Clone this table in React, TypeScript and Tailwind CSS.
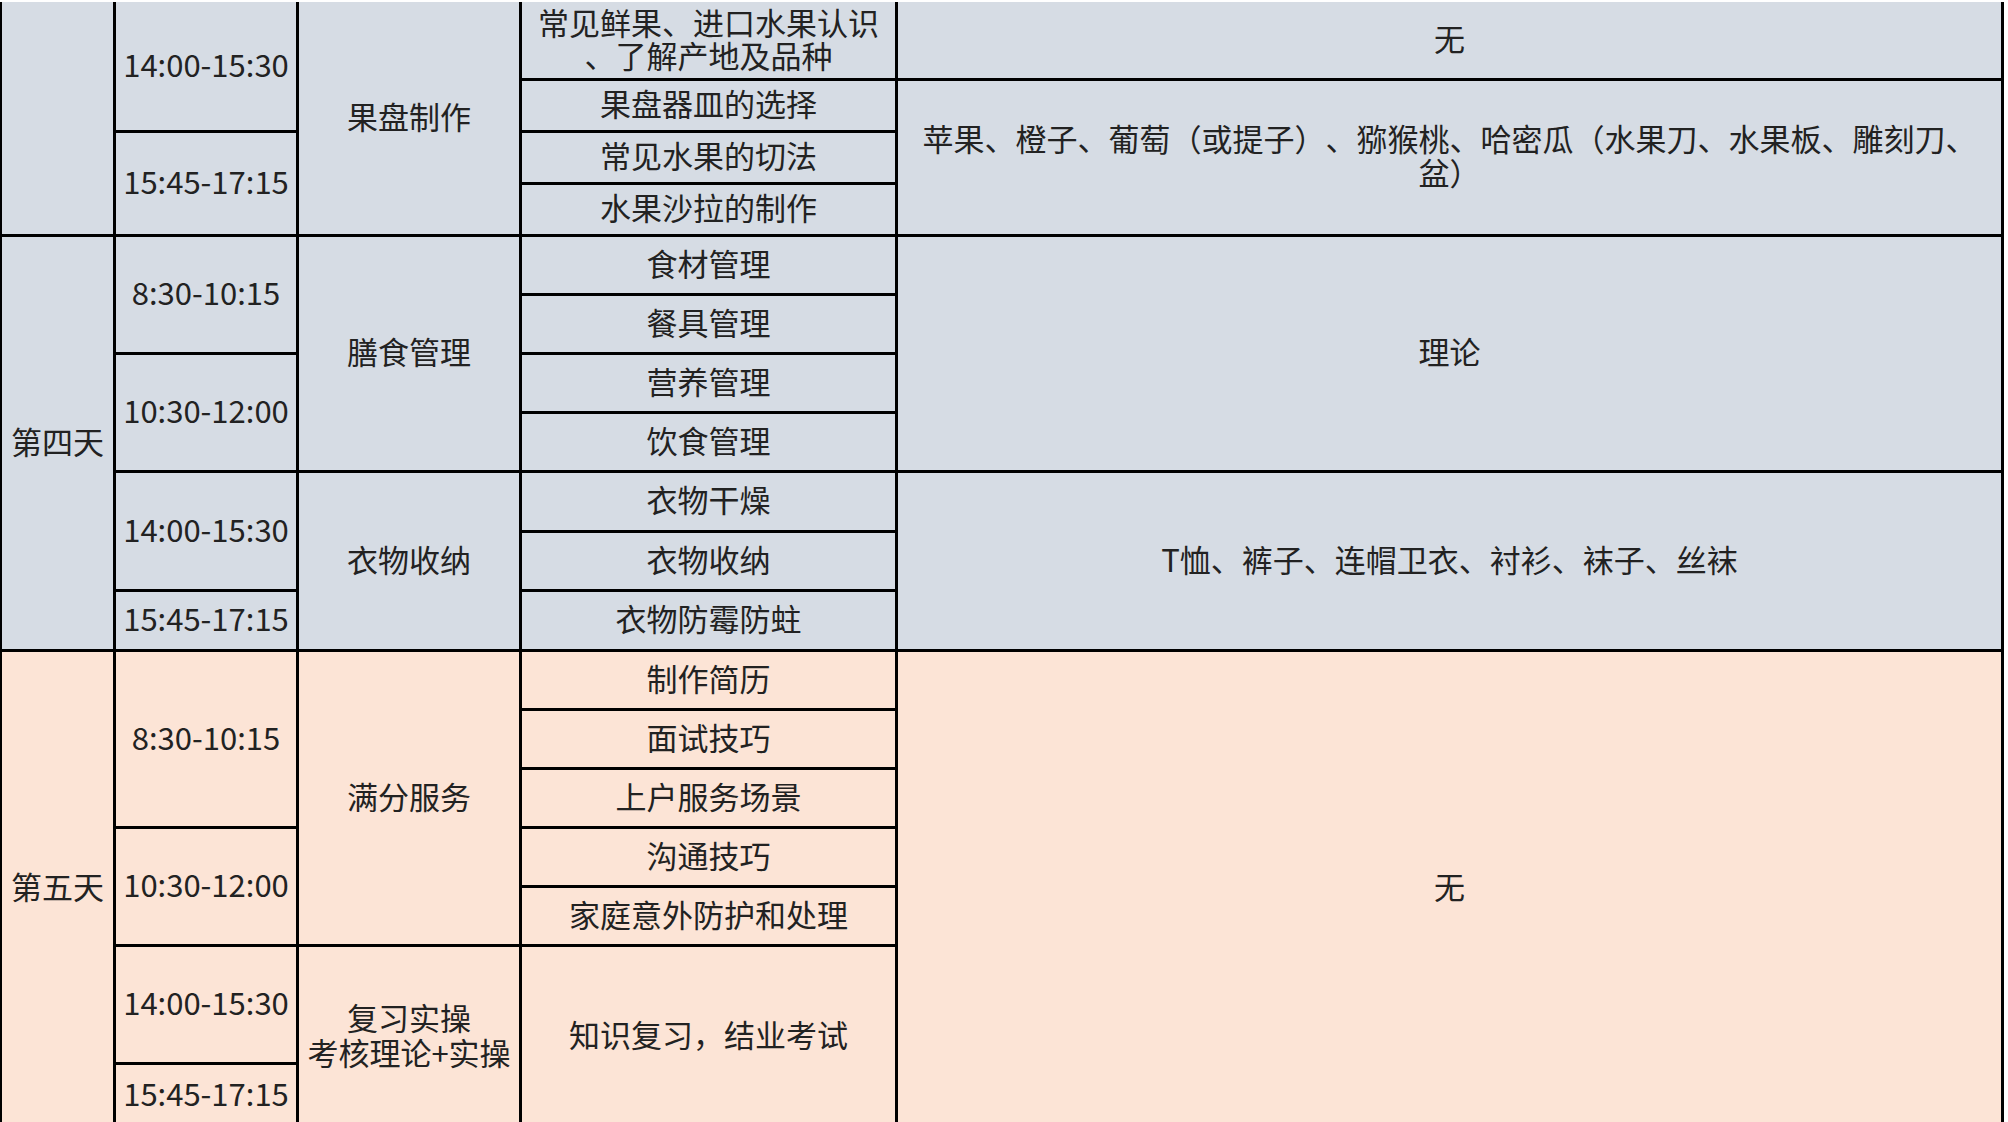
import React from "react";

type C = { pos: string; bg: string; children?: React.ReactNode };

function Cell({ pos, bg, children }: C) {
  return (
    <div className={`${pos} ${bg} flex items-center justify-center text-center leading-[34px] pb-[5px]`}>
      {children}
    </div>
  );
}

const B = "bg-[#d6dce4]";
const P = "bg-[#fce4d6]";

export default function App() {
  return (
    <div className="w-[2008px] h-[1122px] overflow-hidden bg-white">
      <div
        className="mt-[2px] w-[2004px] bg-black pl-[2px] pr-[3px] grid gap-[3px] grid-cols-[111px_180px_220px_373px_1103px] grid-rows-[76px_49px_49px_49px_56px_56px_56px_56px_57px_56px_57px_56px_56px_56px_56px_56px_115px_60px] text-[31px] text-[#222222] [text-spacing-trim:space-all]"
        style={{ fontFamily: '"Noto Sans CJK SC", "Noto Sans", sans-serif' }}
      >
        {/* Column 1: day */}
        <Cell pos="col-start-1 [grid-row:1/5]" bg={B} />
        <Cell pos="col-start-1 [grid-row:5/12]" bg={B}>第四天</Cell>
        <Cell pos="col-start-1 [grid-row:12/19]" bg={P}>第五天</Cell>

        {/* Column 2: time */}
        <Cell pos="col-start-2 [grid-row:1/3]" bg={B}>14:00-15:30</Cell>
        <Cell pos="col-start-2 [grid-row:3/5]" bg={B}>15:45-17:15</Cell>
        <Cell pos="col-start-2 [grid-row:5/7]" bg={B}>8:30-10:15</Cell>
        <Cell pos="col-start-2 [grid-row:7/9]" bg={B}>10:30-12:00</Cell>
        <Cell pos="col-start-2 [grid-row:9/11]" bg={B}>14:00-15:30</Cell>
        <Cell pos="col-start-2 [grid-row:11/12]" bg={B}>15:45-17:15</Cell>
        <Cell pos="col-start-2 [grid-row:12/15]" bg={P}>8:30-10:15</Cell>
        <Cell pos="col-start-2 [grid-row:15/17]" bg={P}>10:30-12:00</Cell>
        <Cell pos="col-start-2 [grid-row:17/18]" bg={P}>14:00-15:30</Cell>
        <Cell pos="col-start-2 [grid-row:18/19]" bg={P}>15:45-17:15</Cell>

        {/* Column 3: topic */}
        <Cell pos="col-start-3 [grid-row:1/5]" bg={B}>果盘制作</Cell>
        <Cell pos="col-start-3 [grid-row:5/9]" bg={B}>膳食管理</Cell>
        <Cell pos="col-start-3 [grid-row:9/12]" bg={B}>衣物收纳</Cell>
        <Cell pos="col-start-3 [grid-row:12/17]" bg={P}>满分服务</Cell>
        <Cell pos="col-start-3 [grid-row:17/19]" bg={P}>
          <span className="leading-[35px]">
            复习实操
            <br />
            考核理论+实操
          </span>
        </Cell>

        {/* Column 4: items */}
        <Cell pos="col-start-4 [grid-row:1/2]" bg={B}>
          <span className="leading-[33px]">
            常见鲜果、进口水果认识
            <br />
            、了解产地及品种
          </span>
        </Cell>
        <Cell pos="col-start-4 [grid-row:2/3]" bg={B}>果盘器皿的选择</Cell>
        <Cell pos="col-start-4 [grid-row:3/4]" bg={B}>常见水果的切法</Cell>
        <Cell pos="col-start-4 [grid-row:4/5]" bg={B}>水果沙拉的制作</Cell>
        <Cell pos="col-start-4 [grid-row:5/6]" bg={B}>食材管理</Cell>
        <Cell pos="col-start-4 [grid-row:6/7]" bg={B}>餐具管理</Cell>
        <Cell pos="col-start-4 [grid-row:7/8]" bg={B}>营养管理</Cell>
        <Cell pos="col-start-4 [grid-row:8/9]" bg={B}>饮食管理</Cell>
        <Cell pos="col-start-4 [grid-row:9/10]" bg={B}>衣物干燥</Cell>
        <Cell pos="col-start-4 [grid-row:10/11]" bg={B}>衣物收纳</Cell>
        <Cell pos="col-start-4 [grid-row:11/12]" bg={B}>衣物防霉防蛀</Cell>
        <Cell pos="col-start-4 [grid-row:12/13]" bg={P}>制作简历</Cell>
        <Cell pos="col-start-4 [grid-row:13/14]" bg={P}>面试技巧</Cell>
        <Cell pos="col-start-4 [grid-row:14/15]" bg={P}>上户服务场景</Cell>
        <Cell pos="col-start-4 [grid-row:15/16]" bg={P}>沟通技巧</Cell>
        <Cell pos="col-start-4 [grid-row:16/17]" bg={P}>家庭意外防护和处理</Cell>
        <Cell pos="col-start-4 [grid-row:17/19]" bg={P}>知识复习，结业考试</Cell>

        {/* Column 5: materials */}
        <Cell pos="col-start-5 [grid-row:1/2]" bg={B}>无</Cell>
        <Cell pos="col-start-5 [grid-row:2/5]" bg={B}>
          <span>
            苹果、橙子、葡萄（或提子）、猕猴桃、哈密瓜（水果刀、水果板、雕刻刀、
            <br />
            盆）
          </span>
        </Cell>
        <Cell pos="col-start-5 [grid-row:5/9]" bg={B}>理论</Cell>
        <Cell pos="col-start-5 [grid-row:9/12]" bg={B}>T恤、裤子、连帽卫衣、衬衫、袜子、丝袜</Cell>
        <Cell pos="col-start-5 [grid-row:12/19]" bg={P}>无</Cell>
      </div>
    </div>
  );
}
